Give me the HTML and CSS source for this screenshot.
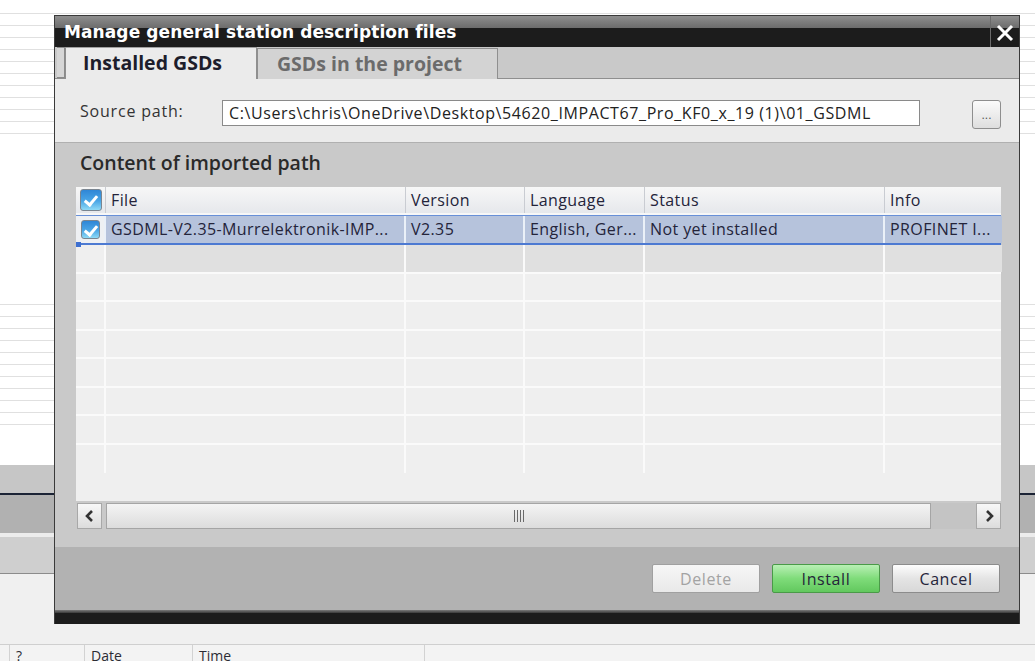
FILE: index.html
```html
<!DOCTYPE html>
<html lang="en">
<head>
	<meta charset="UTF-8">
	<title>Manage general station description files</title>
	<link rel="stylesheet" href="styles.css">
</head>
<body>
	<div class="desk">
		<div class="desk-list first"></div>
		<div class="desk-list second"></div>
		<div class="desk-band"></div>
		<div class="desk-tool"></div>
		<div class="desk-split"></div>
		<div class="desk-strip"></div>
		<div class="desk-area"></div>
		<div class="desk-head">
			<span class="dh-a"></span>
			<span class="dh-b">?</span>
			<span class="dh-c">Date</span>
			<span class="dh-d">Time</span>
			<span class="dh-e"></span>
		</div>
	</div>

	<div class="dlg">
		<header class="dlg-title">
			<h1>Manage general station description files</h1>
			<span class="dlg-close">
				<svg width="20" height="18" viewBox="0 0 20 18"><path d="M3 2 L17 16 M17 2 L3 16" stroke="#fff" stroke-width="3" fill="none"/></svg>
			</span>
		</header>

		<div class="dlg-tabs">
			<span class="tab-stub"></span>
			<div class="tab active">Installed GSDs</div>
			<div class="tab">GSDs in the project</div>
		</div>

		<div class="src-row">
			<label>Source path:</label>
			<div class="src-input">C:\Users\chris\OneDrive\Desktop\54620_IMPACT67_Pro_KF0_x_19 (1)\01_GSDML</div>
			<button class="src-browse">...</button>
		</div>

		<section class="imp">
			<h2>Content of imported path</h2>
			<div class="grid">
				<div class="g-row g-head">
					<div class="cell chk"><span class="cbox big"></span></div>
					<div class="cell">File</div>
					<div class="cell">Version</div>
					<div class="cell">Language</div>
					<div class="cell">Status</div>
					<div class="cell">Info</div>
				</div>
				<div class="g-row sel">
					<div class="cell chk"><span class="cbox"></span></div>
					<div class="cell">GSDML-V2.35-Murrelektronik-IMP...</div>
					<div class="cell">V2.35</div>
					<div class="cell">English, Ger...</div>
					<div class="cell">Not yet installed</div>
					<div class="cell">PROFINET I...</div>
				</div>
				<div class="g-row hover">
					<div class="cell chk"></div><div class="cell"></div><div class="cell"></div><div class="cell"></div><div class="cell"></div><div class="cell"></div>
				</div>
				<div class="g-row"><div class="cell chk"></div><div class="cell"></div><div class="cell"></div><div class="cell"></div><div class="cell"></div><div class="cell"></div></div>
				<div class="g-row"><div class="cell chk"></div><div class="cell"></div><div class="cell"></div><div class="cell"></div><div class="cell"></div><div class="cell"></div></div>
				<div class="g-row"><div class="cell chk"></div><div class="cell"></div><div class="cell"></div><div class="cell"></div><div class="cell"></div><div class="cell"></div></div>
				<div class="g-row"><div class="cell chk"></div><div class="cell"></div><div class="cell"></div><div class="cell"></div><div class="cell"></div><div class="cell"></div></div>
				<div class="g-row"><div class="cell chk"></div><div class="cell"></div><div class="cell"></div><div class="cell"></div><div class="cell"></div><div class="cell"></div></div>
				<div class="g-row"><div class="cell chk"></div><div class="cell"></div><div class="cell"></div><div class="cell"></div><div class="cell"></div><div class="cell"></div></div>
				<div class="g-row last"><div class="cell chk"></div><div class="cell"></div><div class="cell"></div><div class="cell"></div><div class="cell"></div><div class="cell"></div></div>
			</div>
			<div class="hscroll">
				<span class="sb-btn">
					<svg width="12" height="14" viewBox="0 0 12 14"><path d="M8 2 L3 7 L8 12" stroke="#333" stroke-width="2.6" fill="none"/></svg>
				</span>
				<span class="sb-thumb"><i></i><i></i><i></i><i></i></span>
				<span class="sb-track"></span>
				<span class="sb-btn">
					<svg width="12" height="14" viewBox="0 0 12 14"><path d="M4 2 L9 7 L4 12" stroke="#333" stroke-width="2.6" fill="none"/></svg>
				</span>
			</div>
		</section>

		<footer class="dlg-foot">
			<button class="btn" disabled>Delete</button>
			<button class="btn go">Install</button>
			<button class="btn">Cancel</button>
		</footer>
		<div class="dlg-bottom"></div>
	</div>
</body>
</html>
```

FILE: styles.css
```css
html, body {
	margin: 0;
	padding: 0;
	height: 100%;
}
body {
	background: #fff;
	font-family: "Open Sans", "Noto Sans", sans-serif;
	color: #2b2b33;
	overflow: hidden;
	position: relative;
}
h1, h2 {
	margin: 0;
	padding: 0;
}

/* background application */
.desk {
	width: 100%;
}
.desk-list {
	height: 121px;
	background: repeating-linear-gradient(to bottom, #e0e0e0 0, #e0e0e0 1px, transparent 1px, transparent 12px);
}
.desk-list.first {
	margin-top: 13px;
}
.desk-list.second {
	margin-top: 170px;
}
.desk-band {
	margin-top: 40px;
	height: 28px;
	background: #c6c6c6;
	border-bottom: 2px solid #1b2335;
}
.desk-tool {
	height: 38px;
	background: #b1b1b1;
}
.desk-split {
	height: 4px;
	background: #ececec;
}
.desk-strip {
	height: 36px;
	background: #cfcfcf;
	border-bottom: 1px solid #8c8c8c;
}
.desk-area {
	height: 70px;
	background: #f0f0f0;
	border-bottom: 1px solid #cfcfcf;
}
.desk-head {
	display: flex;
	height: 17px;
	background: #f3f3f3;
	font-size: 14px;
	line-height: 22px;
	overflow: hidden;
}
.desk-head span {
	border-right: 1px solid #d2d2d2;
	padding-left: 6px;
	box-sizing: border-box;
}
.dh-a { width: 10px; }
.dh-b { width: 75px; }
.dh-c { width: 108px; }
.dh-d { width: 232px; }
.dh-e { flex: 1; border-right: 0 !important; }

/* dialog window */
.dlg {
	position: absolute;
	left: 54px;
	top: 15px;
	width: 966px;
	height: 609px;
	box-sizing: border-box;
	border: 1px solid #3a3a3a;
	border-bottom: 0;
	display: flex;
	flex-direction: column;
	background: #c9c9c9;
}
.dlg-title {
	height: 31px;
	display: flex;
	background: linear-gradient(to bottom, #8e8e8e 0, #6c6c6c 12px, #1c1c1c 12px, #1c1c1c 100%);
}
.dlg-title h1 {
	flex: 1;
	font-family: "DejaVu Sans", sans-serif;
	font-size: 17px;
	font-weight: bold;
	color: #fff;
	line-height: 32px;
	padding-left: 9px;
	letter-spacing: 0.1px;
}
.dlg-close {
	width: 28px;
	border-left: 1px solid #6a6a6a;
	display: flex;
	align-items: center;
	justify-content: center;
	padding-top: 2px;
}

.dlg-tabs {
	height: 32px;
	box-sizing: border-box;
	background: #c9c9c9;
	border-bottom: 1px solid #8f8f8f;
	display: flex;
	align-items: flex-end;
	padding-left: 2px;
}
.tab-stub {
	width: 8px;
	height: 31px;
	box-sizing: border-box;
	border: 1px solid #8a8a8a;
	border-left: 0;
	background: #d6d6d6;
	align-self: flex-start;
}
.tab {
	height: 31px;
	box-sizing: border-box;
	border: 1px solid #8f8f8f;
	border-bottom: 0;
	font-size: 19.5px;
	font-weight: bold;
	line-height: 29px;
	background: #d3d3d3;
	color: #6b6b6b;
	width: 241px;
	padding-left: 19px;
	margin-bottom: -1px;
}
.tab.active {
	width: 192px;
	height: 32px;
	background: #ebebeb;
	color: #1d1d2b;
	padding-left: 17px;
	border-top-color: #a0a0a0;
}

.src-row {
	height: 64px;
	box-sizing: border-box;
	background: #ebebeb;
	border-bottom: 1px solid #b0b0b0;
	display: flex;
	align-items: center;
	padding: 4px 18px 0 25px;
}
.src-row label {
	width: 142px;
	font-size: 16px;
	letter-spacing: 0.8px;
	color: #333;
	padding-bottom: 4px;
}
.src-input {
	width: 698px;
	height: 26px;
	box-sizing: border-box;
	background: #fff;
	border: 1px solid #8a8a8a;
	font-size: 16px;
	letter-spacing: 0.6px;
	line-height: 24px;
	padding-left: 6px;
	color: #222;
	white-space: nowrap;
	overflow: hidden;
}
.src-browse {
	margin-left: 52px;
	width: 29px;
	height: 29px;
	margin-top: 4px;
	border: 1px solid #8e8e8e;
	border-radius: 3px;
	background: linear-gradient(to bottom, #fbfbfb, #dedede);
	font-size: 12px;
	color: #555;
	padding: 0;
	line-height: 26px;
}

.imp {
	height: 404px;
	box-sizing: border-box;
	padding: 0 18px 0 21px;
	background: #c9c9c9;
}
.imp h2 {
	font-size: 19.5px;
	font-weight: 600;
	color: #2a2a2a;
	height: 44px;
	line-height: 40px;
	padding-left: 4px;
}

.grid {
	background: #efefef;
	height: 314px;
}
.g-row {
	display: grid;
	grid-template-columns: 30px 300px 119px 120px 240px 117px;
	height: 28.5px;
	box-sizing: border-box;
	border-bottom: 2px solid #fafafa;
}
.cell {
	border-right: 2px solid #fafafa;
	font-size: 16px;
	letter-spacing: 0.4px;
	line-height: 26px;
	padding-left: 5px;
	white-space: nowrap;
	overflow: hidden;
	color: #24243a;
}
.cell:last-child {
	border-right: 0;
}
.g-head {
	height: 28px;
	background: linear-gradient(to bottom, #f7f7f7, #e6e8ec);
	border-bottom: 2px solid #f7f7f7;
}
.g-head .cell {
	border-right: 1px solid #c9ccd2;
}
.g-head .cell:last-child {
	border-right: 0;
}
.chk {
	padding-left: 0;
	display: flex;
	align-items: center;
	justify-content: center;
}
.g-row.sel {
	height: 30px;
	border-top: 1px solid #6890d8;
	border-bottom: 2px solid #4d7ad2;
	position: relative;
}
.g-row.sel .cell {
	background: #b6c3dc;
	border-right-color: #eaf0f8;
	line-height: 27px;
}
.g-row.sel .cell.chk {
	background: #eef0f3;
}
.g-row.sel::after {
	content: "";
	position: absolute;
	left: 0;
	bottom: -4px;
	width: 5px;
	height: 5px;
	background: #3d6fd0;
}
.g-row.hover .cell {
	background: #e0e0e0;
}
.g-row.hover .cell.chk {
	background: #efefef;
}
.g-row.last {
	border-bottom: 0;
}

.cbox {
	width: 19px;
	height: 19px;
	box-sizing: border-box;
	border: 1px solid #7a8590;
	border-radius: 3px;
	background: linear-gradient(to bottom, #2f86d6, #4aa6e6 55%, #8fdaf6);
	position: relative;
}
.cbox.big {
	width: 22px;
	height: 22px;
}
.cbox::after {
	content: "";
	position: absolute;
	left: 5px;
	top: 2px;
	width: 5px;
	height: 10px;
	border: solid #fff;
	border-width: 0 3px 3px 0;
	transform: rotate(40deg);
}
.cbox.big::after {
	left: 6px;
	top: 3px;
}

.hscroll {
	display: flex;
	height: 26px;
	margin-top: 2px;
}
.sb-btn {
	width: 25px;
	box-sizing: border-box;
	border: 1px solid #a8a8a8;
	background: linear-gradient(to bottom, #f8f8f8, #dcdcdc);
	display: flex;
	align-items: center;
	justify-content: center;
}
.sb-btn:first-child {
	margin-left: 1px;
}
.sb-thumb {
	width: 825px;
	margin-left: 4px;
	box-sizing: border-box;
	border: 1px solid #a5a5a5;
	background: linear-gradient(to bottom, #f4f4f4, #dcdcdc);
	display: flex;
	align-items: center;
	justify-content: center;
	gap: 2px;
}
.sb-thumb i {
	width: 1px;
	height: 12px;
	background: #6a6a6a;
}
.sb-track {
	flex: 1;
	background: #c4c4c4;
}

.dlg-foot {
	height: 63px;
	box-sizing: border-box;
	background: #b2b2b2;
	display: flex;
	justify-content: flex-end;
	padding: 17px 19px 0 0;
	gap: 12px;
}
.btn {
	width: 108px;
	height: 29px;
	border: 1px solid #8c8c8c;
	border-radius: 2px;
	background: linear-gradient(to bottom, #fdfdfd, #e4e4e4 50%, #d8d8d8);
	font-family: "Open Sans", "Noto Sans", sans-serif;
	font-size: 16px;
	color: #25253a;
	padding: 0;
	letter-spacing: 0.6px;
}
.btn[disabled] {
	background: linear-gradient(to bottom, #f6f6f6, #e9e9e9);
	color: #a3a3a3;
	border-color: #a0a0a0;
}
.btn.go {
	background: linear-gradient(to bottom, #b9f0b5, #7fdc7a 50%, #62c85e);
	border-color: #4a9a48;
}
.dlg-bottom {
	height: 14px;
	background: linear-gradient(to bottom, #7a7a7a 0, #3a3a3a 3px, #1c1c1c 3px);
}
```
